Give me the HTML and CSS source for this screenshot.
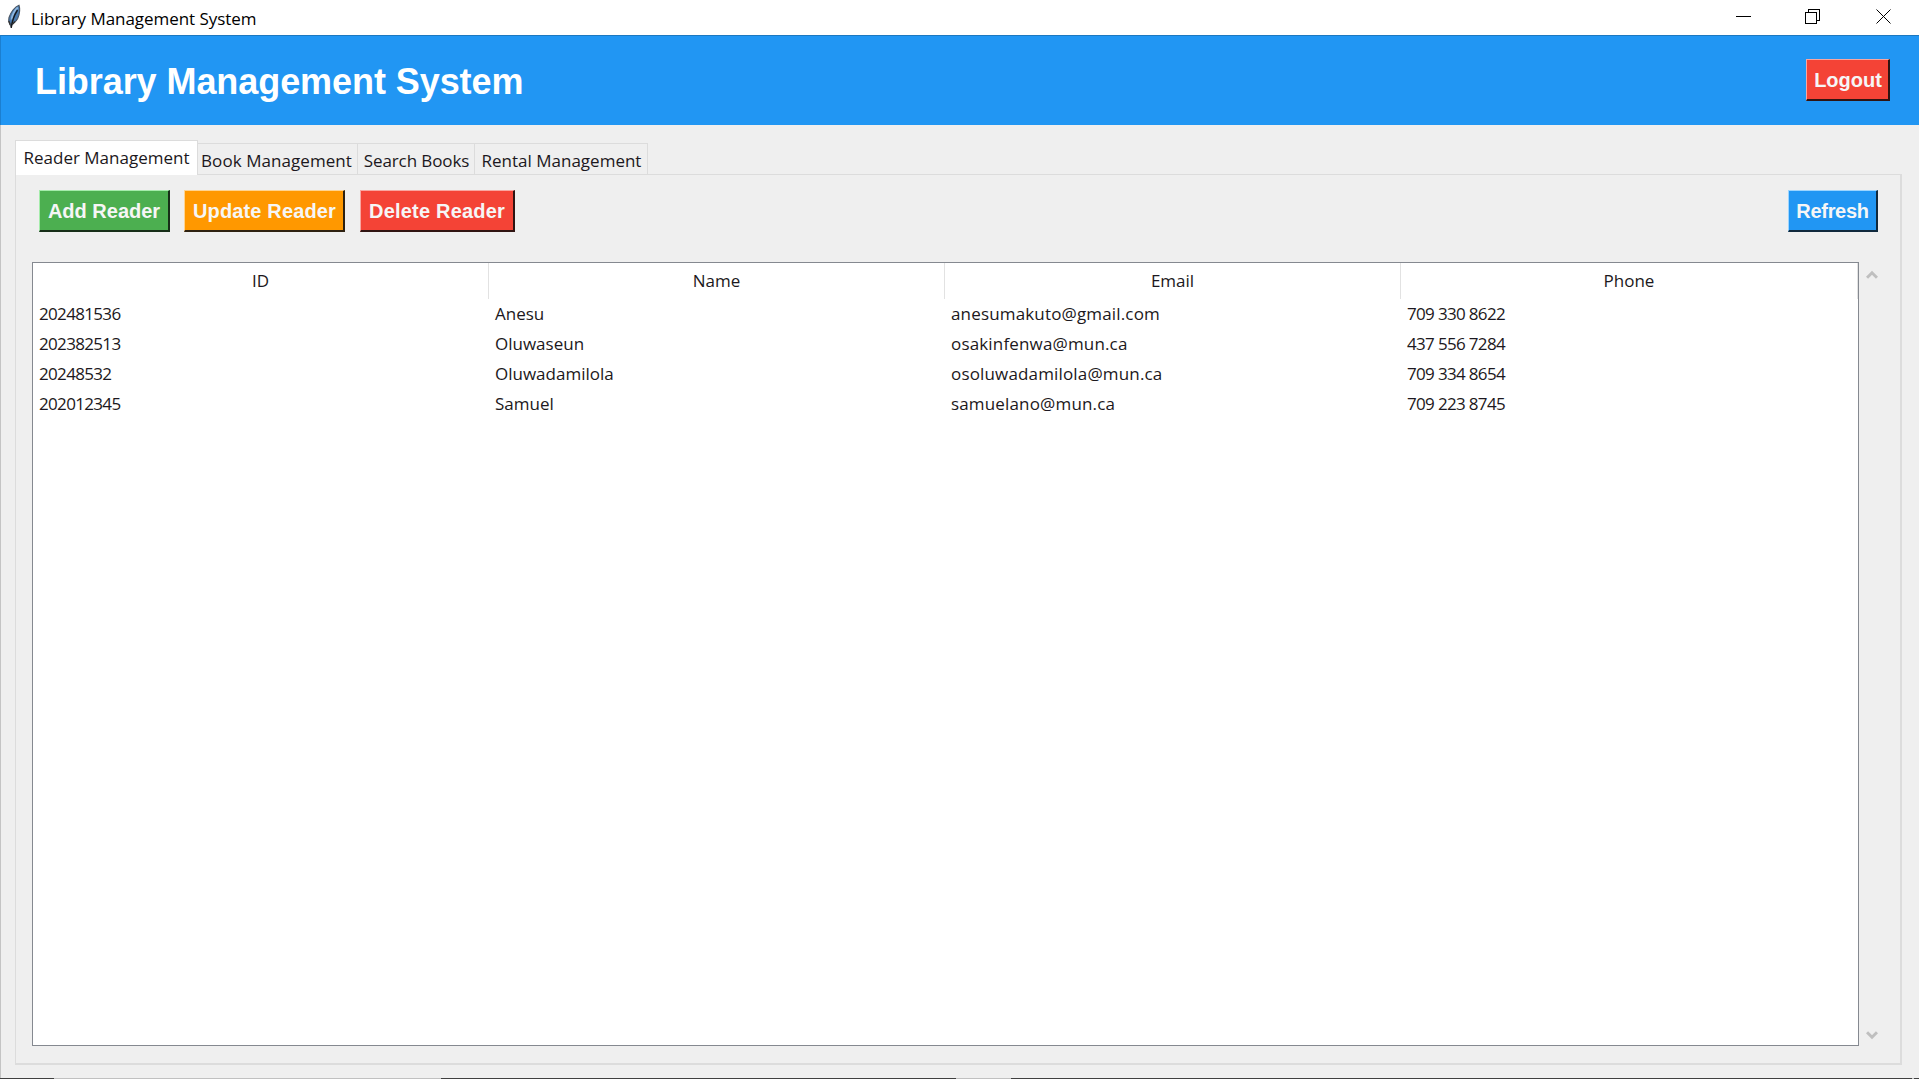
FILE: index.html
```html
<!DOCTYPE html>
<html lang="en">
<head>
<meta charset="utf-8">
<title>Library Management System</title>
<link rel="stylesheet" href="styles.css">
</head>
<body>
<div class="window">
  <div class="titlebar">
    <svg class="feather" width="16" height="26" viewBox="0 0 16 26">
      <path d="M12 1.200C8 2.400 3.800 8 2 13.500c-.7 2.500-.2 4.500.6 6.300l1.200 2.400 2.600-3.200c2.400-1.300 3.500-2.800 4.300-4.500 1.900-4.500 2.600-9.500 1.300-13.300z" fill="#4a7bb0" stroke="#4a5562" stroke-width="1.100"/>
      <path d="M10.800 3.500C7.500 6.500 5.200 11 4.600 15.500" fill="none" stroke="#8fb7df" stroke-width="1.800"/>
      <path d="M10.500 6C7 11.500 5.200 16 4.200 24" fill="none" stroke="#15191f" stroke-width="1.400"/>
      <path d="M1.800 17l1.500 3.800M8.200 17.500l-2.500 2.500" stroke="#333" stroke-width="1.400"/>
    </svg>
    <span class="caption">Library Management System</span>
    <svg class="controls" width="159" height="17" viewBox="0 0 159 17" fill="none" stroke="#000" shape-rendering="crispEdges">
      <path d="M0 8.500h15"/>
      <path d="M69.500 4.500h11v11h-11zM72.500 4.500v-3h11v11h-3"/>
      <path d="M140.500 1.500l14 14M154.500 1.500l-14 14" shape-rendering="auto"/>
    </svg>
  </div>
  <header class="banner">
    <h1>Library Management System</h1>
    <button class="btn red logout">Logout</button>
  </header>
  <main class="notebook">
    <nav class="tabs">
      <div class="tab active">Reader Management</div>
      <div class="tab book">Book Management</div>
      <div class="tab search">Search Books</div>
      <div class="tab rental">Rental Management</div>
    </nav>
    <section class="pane">
      <div class="toolbar">
        <button class="btn green add">Add Reader</button>
        <button class="btn orange update">Update Reader</button>
        <button class="btn red delete">Delete Reader</button>
        <button class="btn blue refresh">Refresh</button>
      </div>
      <div class="list">
        <div class="table">
          <div class="row head"><div>ID</div><div>Name</div><div>Email</div><div>Phone</div></div>
          <div class="row"><div class="num">202481536</div><div>Anesu</div><div class="mail">anesumakuto@gmail.com</div><div class="num">709 330 8622</div></div>
          <div class="row"><div class="num">202382513</div><div>Oluwaseun</div><div class="mail">osakinfenwa@mun.ca</div><div class="num">437 556 7284</div></div>
          <div class="row"><div class="num">20248532</div><div>Oluwadamilola</div><div class="mail">osoluwadamilola@mun.ca</div><div class="num">709 334 8654</div></div>
          <div class="row"><div class="num">202012345</div><div>Samuel</div><div class="mail">samuelano@mun.ca</div><div class="num">709 223 8745</div></div>
        </div>
        <div class="scrollbar">
          <svg width="12" height="10" viewBox="0 0 12 10"><path d="M1 7.800l5-5 5 5" fill="none" stroke="#bfbfbf" stroke-width="3"/></svg>
          <svg width="12" height="10" viewBox="0 0 12 10"><path d="M1 2.200l5 5 5-5" fill="none" stroke="#bfbfbf" stroke-width="3"/></svg>
        </div>
      </div>
    </section>
  </main>
  <footer class="edge"><i class="dark"></i><i></i><i class="dark"></i><i></i><i class="dark"></i><i></i><i class="dark"></i></footer>
</div>
</body>
</html>
```

FILE: styles.css
```css
* { box-sizing: border-box; }
body { margin: 0; font-family: "Open Sans", "Noto Sans", sans-serif; font-size: 17px; color: #1c1820; }
.window { width: 1919px; height: 1079px; display: flex; flex-direction: column; background: #efefef; overflow: hidden; }

.titlebar { height: 35px; flex: none; display: flex; align-items: flex-start; background: #fff; color: #000; padding: 4px 24px 0 7px; }
.feather { flex: none; margin-right: 8px; }
.caption { line-height: 29px; letter-spacing: -.05px; }
.controls { margin: 4px 0 0 auto; padding: 0; flex: none; }

.banner { height: 90px; flex: none; display: flex; justify-content: space-between; align-items: flex-start; background: #2196f3; border-top: 1px solid #1c78c0; border-left: 1px solid #1b7fd0; padding: 23px 29px 0 34px; }
h1 { margin: 2px 0 0; font: bold 36px/41px "Liberation Sans", Arial, sans-serif; letter-spacing: -.07px; color: #fff; }

.btn { height: 42px; padding: 0; border: 0 solid; border-width: 1px 2px 2px 1px; font: bold 20px/38px "Liberation Sans", Arial, sans-serif; color: #f6f6f6; white-space: nowrap; text-align: center; }
.green { background: #4caf50; border-color: #a5ecab #172e18 #172e18 #a5ecab; }
.orange { background: #ff9800; border-color: #ffd491 #2e2110 #2e2110 #ffd491; }
.red { background: #f44336; border-color: #f9a6a0 #301412 #301412 #f9a6a0; }
.blue { background: #2196f3; border-color: #9dd5ff #10293d #10293d #9dd5ff; }
.logout { width: 84px; padding-left: 1px; }
.add { width: 131px; }
.update { width: 161px; margin-left: -1px; padding-left: 1px; letter-spacing: .15px; }
.delete { width: 155px; letter-spacing: .2px; }
.refresh { width: 90px; margin-left: auto; letter-spacing: -.3px; }

.notebook { flex: 1; display: flex; flex-direction: column; border-left: 1px solid #c4c4c4; padding: 15px 17px 13px 14px; }
.tabs { height: 34px; display: flex; align-items: flex-end; }
.tab { height: 31px; border: 1px solid #dcdcdc; border-left: 0; border-bottom: 0; line-height: 34px; text-align: center; white-space: nowrap; }
.active { width: 183px; height: 35px; margin-bottom: -1px; background: #fff; border-left: 1px solid #dcdcdc; line-height: 34px; z-index: 1; }
.book { width: 160px; padding-right: 2px; letter-spacing: .06px; }
.search { width: 117px; padding-left: 1px; letter-spacing: -.1px; }
.rental { width: 173px; padding-left: 1px; }
.pane { flex: 1; border: 1px solid #dcdcdc; border-width: 1px 2px 2px 1px; padding: 15px 22px 17px 16px; display: flex; flex-direction: column; }
.toolbar { display: flex; gap: 15px; padding-left: 7px; height: 72px; flex: none; }
.list { flex: 1; display: flex; }
.table { flex: 1; background: #fff; border: 1px solid #858990; }
.row { display: grid; grid-template-columns: 456px 456px 456px 1fr; height: 30px; line-height: 32px; }
.row > div { padding-left: 6px; white-space: nowrap; }
.head { height: 35px; line-height: 36px; text-align: center; }
.head > div { padding: 0; border-right: 1px solid #e2e2e2; }
.row > .num { letter-spacing: -.67px; }
.row > .mail { letter-spacing: .16px; }
.scrollbar { width: 19px; padding: 8px 0 6px 7px; display: flex; flex-direction: column; justify-content: space-between; }

.edge { height: 1px; flex: none; display: grid; grid-template-columns: 54px 387px 515px 55px 901px 2px 5px; background: #c0c0c0; }
.dark { background: #404040; }
```
